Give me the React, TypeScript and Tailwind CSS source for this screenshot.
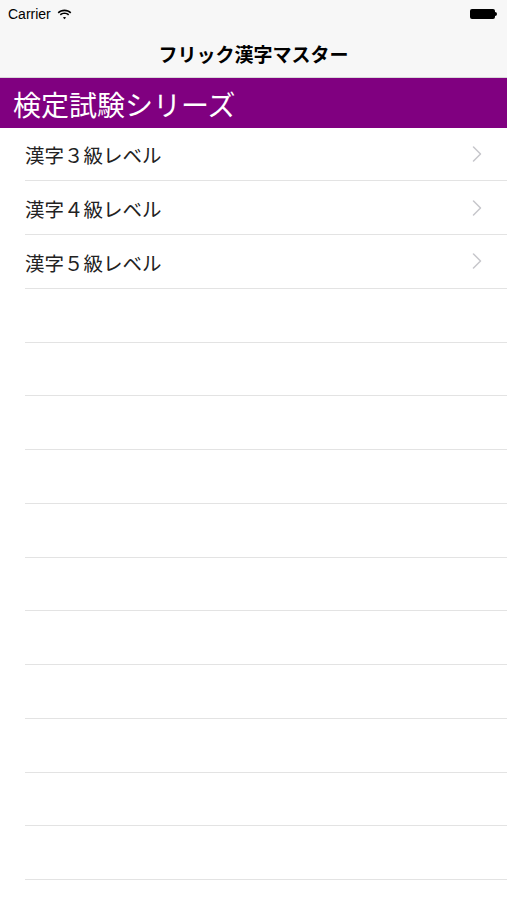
import { ChevronRight } from "lucide-react";

const levels = ["漢字３級レベル", "漢字４級レベル", "漢字５級レベル"];

const jp = "font-['Helvetica_Neue','Noto_Sans_CJK_JP',sans-serif]";

function StatusBar() {
  return (
    <div className="flex h-[28px] items-center justify-between px-2">
      <div className="flex items-center gap-1.5">
        <span className="font-['Liberation_Sans',sans-serif] text-[14px] text-black">Carrier</span>
        <svg width="15" height="11" viewBox="0 0 15 11">
          <path d="M7.5 2.2c2.2 0 4.2.8 5.7 2.2l1.1-1.2C12.5 1.5 10.1.5 7.5.5S2.5 1.5.7 3.2l1.1 1.2C3.3 3 5.3 2.2 7.5 2.2z" fill="#000" />
          <path d="M7.5 5.1c1.4 0 2.6.5 3.6 1.3l1.1-1.2C11 4.1 9.3 3.4 7.5 3.4S4 4.1 2.8 5.2l1.1 1.2c1-.8 2.2-1.3 3.6-1.3z" fill="#000" />
          <path d="M7.5 7.9c.7 0 1.2.2 1.6.6L7.5 10.3 5.9 8.5c.4-.4.9-.6 1.6-.6z" fill="#000" />
        </svg>
      </div>
      <div className="flex items-center pr-0.5">
        <div className="h-[10px] w-[25px] rounded-[2px] bg-black" />
        <div className="h-[4px] w-[2px] rounded-r-sm bg-black" />
      </div>
    </div>
  );
}

export default function App() {
  return (
    <div className={`min-h-[900px] w-full bg-white ${jp}`}>
      <header className="bg-[#f7f7f7]">
        <StatusBar />
        <div className="flex h-[50px] items-center justify-center border-b border-[#d8d8d8] pt-1">
          <h1 className="text-[19px] font-bold text-black">フリック漢字マスター</h1>
        </div>
      </header>

      <div className="flex h-[49.5px] items-center bg-[#800080] px-[13px] pt-0.5">
        <h2 className="text-[28px] text-white">検定試験シリーズ</h2>
      </div>

      <ul>
        {Array.from({ length: 14 }).map((_, index) => {
          const label = levels[index];
          return (
            <li key={index} className="pl-[25px]">
              <div className="flex h-[53.75px] items-center border-b border-[#e3e3e3] pr-[16px]">
                {label ? (
                  <>
                    <span className="flex-1 pt-0.5 text-[19.5px] text-[#222]">{label}</span>
                    <ChevronRight className="h-[28px] w-[28px] text-[#c7c7cc]" strokeWidth={1.3} />
                  </>
                ) : null}
              </div>
            </li>
          );
        })}
      </ul>
    </div>
  );
}
